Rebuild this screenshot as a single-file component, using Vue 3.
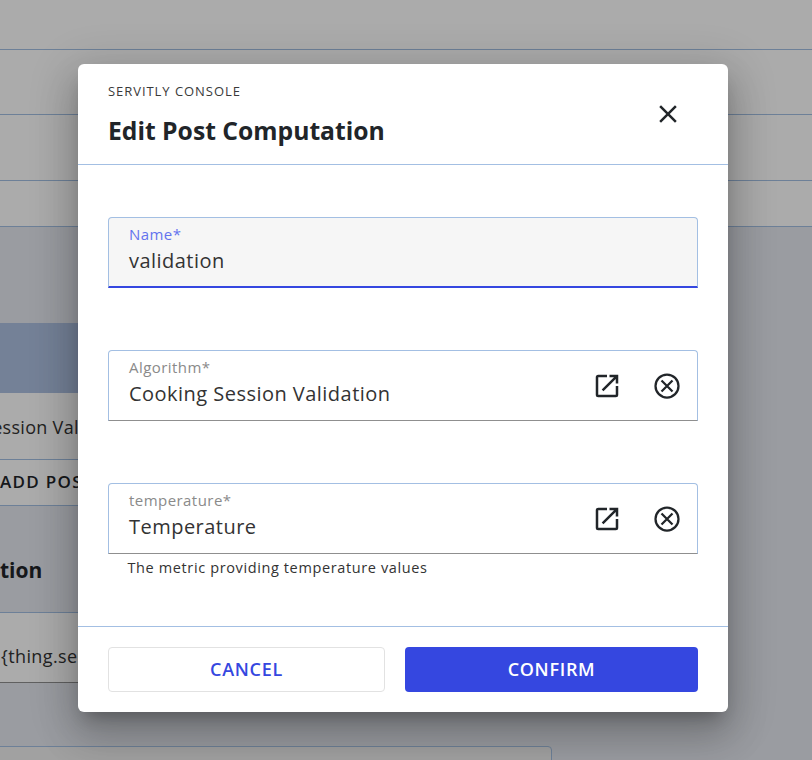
<script setup>
const fields = [
  { label: 'Algorithm*', value: 'Cooking Session Validation' },
  { label: 'temperature*', value: 'Temperature', hint: 'The metric providing temperature values' },
]
</script>

<template>
  <div class="page">
    <div class="backdrop">
      <div class="bg-row r1"></div>
      <div class="bg-row r2"></div>
      <div class="bg-row r3"></div>
      <div class="bg-row r4"></div>
      <section class="section">
        <div class="band"></div>
        <div class="cell c-val"><span>Session Validation</span></div>
        <div class="cell c-add"><span>ADD POST</span></div>
        <div class="c-title"><span>tion</span></div>
        <div class="cell c-input"><span>{thing.serial}</span></div>
        <div class="lower-box"></div>
      </section>
    </div>
    <div class="scrim"></div>
    <div class="modal">
      <header class="head">
        <div class="head-text">
          <div class="eyebrow">SERVITLY CONSOLE</div>
          <h1 class="title">Edit Post Computation</h1>
        </div>
        <svg class="close" width="30" height="30" viewBox="0 0 24 24"><path d="M19 6.41 17.59 5 12 10.59 6.41 5 5 6.41 10.59 12 5 17.59 6.41 19 12 13.41 17.59 19 19 17.59 13.41 12z" fill="#212529"/></svg>
      </header>
      <div class="body">
        <div class="field focused">
          <div class="field-text">
            <label class="lbl">Name*</label>
            <div class="val">validation</div>
          </div>
        </div>
        <div v-for="f in fields" :key="f.label" class="group">
          <div class="field">
            <div class="field-text">
              <label class="lbl">{{ f.label }}</label>
              <div class="val">{{ f.value }}</div>
            </div>
            <svg class="ico" width="30" height="30" viewBox="0 0 24 24"><path d="M19 19H5V5h7V3H5a2 2 0 0 0-2 2v14a2 2 0 0 0 2 2h14a2 2 0 0 0 2-2v-7h-2v7zM14 3v2h3.59l-9.83 9.83 1.41 1.41L19 6.41V10h2V3h-7z" fill="#212529"/></svg>
            <svg class="ico last" width="30" height="30" viewBox="0 0 24 24" fill="none" stroke="#212529"><circle cx="12" cy="12" r="9.2" stroke-width="1.8"/><path d="M7.6 7.6l8.8 8.8M16.4 7.6l-8.8 8.8" stroke-width="1.8"/></svg>
          </div>
          <div v-if="f.hint" class="hint">{{ f.hint }}</div>
        </div>
      </div>
      <footer class="foot">
        <button class="btn cancel">CANCEL</button>
        <button class="btn confirm">CONFIRM</button>
      </footer>
    </div>
  </div>
</template>

<style>
html, body { margin: 0; padding: 0; }
</style>

<style scoped>
.page {
  position: relative;
  width: 812px;
  height: 760px;
  overflow: hidden;
  font-family: "Open Sans", "Noto Sans", sans-serif;
  color: #212529;
}
.bg-row { background: #fff; border-bottom: 1px solid #a3bfe3; box-sizing: border-box; }
.r1 { height: 50px; }
.r2 { height: 65px; }
.r3 { height: 66px; }
.r4 { height: 46px; }
.section {
  background: #e6e9f0;
  height: 534px;
  padding-top: 96px;
  box-sizing: border-box;
}
.band { height: 70px; width: 600px; background: #adc1e2; }
.cell {
  width: 600px;
  background: #fff;
  box-sizing: border-box;
  border-bottom: 1px solid #a3bfe3;
  white-space: nowrap;
  display: flex;
  align-items: center;
  overflow: hidden;
}
.c-val { height: 67px; font-size: 18px; letter-spacing: .3px; color: #333; padding-top: 2px; }
.c-val span { margin-left: -18px; }
.c-add { height: 46px; font-size: 17px; font-weight: 600; letter-spacing: 1.3px; color: #212529; padding-bottom: 2px; }
.c-title { height: 107px; width: 600px; display: flex; align-items: center; overflow: hidden; white-space: nowrap; border-bottom: 1px solid #a3bfe3; box-sizing: border-box; font-size: 21px; font-weight: 700; padding-top: 21px; }
.c-input { height: 70px; font-size: 18px; letter-spacing: .4px; color: #333; border-bottom-color: #8f8f8f; padding-top: 16px; }
.c-input span { margin-left: 1px; }
.lower-box { margin: 63px 0 0 -10px; width: 562px; height: 40px; background: #f0f0f0; border: 1px solid #a3bfe3; border-radius: 4px; box-sizing: border-box; }

.scrim { position: absolute; inset: 0; background: rgba(0, 0, 0, .33); }

.modal {
  position: absolute;
  left: 78px;
  top: 64px;
  width: 650px;
  height: 648px;
  background: #fff;
  border-radius: 6px;
  box-shadow: 0 11px 15px -7px rgba(0,0,0,.24), 0 24px 38px 3px rgba(0,0,0,.16), 0 9px 46px 8px rgba(0,0,0,.14);
  display: flex;
  flex-direction: column;
}
.head {
  height: 101px;
  box-sizing: border-box;
  border-bottom: 1px solid #a3bfe3;
  padding: 19px 30px 0;
  display: flex;
  justify-content: space-between;
}
.eyebrow { font-size: 13px; line-height: 17px; letter-spacing: .95px; color: #3a3a3a; }
.title { margin: 15px 0 0; font-size: 24.7px; line-height: 32px; font-weight: 700; color: #212529; }
.close { margin: 16px 15px 0 0; }
.body { flex: 1; padding: 52px 30px 0; }
.field {
  height: 71px;
  box-sizing: border-box;
  border: 1px solid #a3bfe3;
  border-bottom-color: #8f8f8f;
  border-radius: 4px 4px 0 0;
  padding: 7px 0 0 20px;
  display: flex;
}
.focused { background: #f6f6f6; border-bottom: 2px solid #3547e0; }
.focused .lbl { color: #6373ee; }
.field-text { flex: 1; }
.lbl { display: block; font-size: 15px; line-height: 19px; letter-spacing: .45px; color: #8a8a8a; }
.val { margin-top: 2px; font-size: 20px; line-height: 30px; letter-spacing: .47px; color: #333; }
.group { margin-top: 62px; }
.ico { margin: 13px 15px 0 0; }
.ico.last { margin-right: 15px; margin-left: 15px; }
.hint { margin-top: 4px; padding-left: 19.5px; font-size: 14.5px; line-height: 20px; letter-spacing: .62px; color: #333; }
.foot {
  height: 86px;
  box-sizing: border-box;
  border-top: 1px solid #a3bfe3;
  padding: 20px 30px;
  display: flex;
  gap: 20px;
}
.btn {
  height: 45px;
  padding: 0 0 2px;
  border-radius: 4px;
  font-family: inherit;
  font-size: 18px;
  font-weight: 600;
  letter-spacing: .7px;
  cursor: pointer;
}
.cancel { width: 277px; background: #fff; color: #3547e0; border: 1px solid #e2e2e2; }
.confirm { width: 293px; background: #3547e0; color: #fff; border: 0; }
</style>
